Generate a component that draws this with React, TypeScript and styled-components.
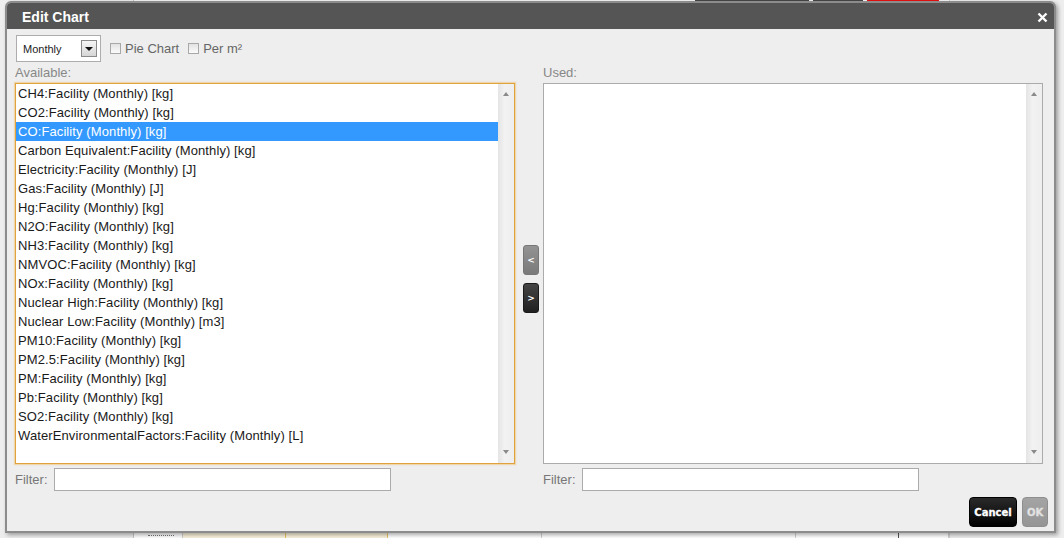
import React from "react";
import styled, { createGlobalStyle } from "styled-components";

const GlobalStyle = createGlobalStyle`
  html, body {
    margin: 0;
    padding: 0;
  }
  body {
    width: 1064px;
    height: 538px;
    overflow: hidden;
    background: #fff;
    font-family: "Liberation Sans", Arial, sans-serif;
  }
`;

const available = [
  "CH4:Facility (Monthly) [kg]",
  "CO2:Facility (Monthly) [kg]",
  "CO:Facility (Monthly) [kg]",
  "Carbon Equivalent:Facility (Monthly) [kg]",
  "Electricity:Facility (Monthly) [J]",
  "Gas:Facility (Monthly) [J]",
  "Hg:Facility (Monthly) [kg]",
  "N2O:Facility (Monthly) [kg]",
  "NH3:Facility (Monthly) [kg]",
  "NMVOC:Facility (Monthly) [kg]",
  "NOx:Facility (Monthly) [kg]",
  "Nuclear High:Facility (Monthly) [kg]",
  "Nuclear Low:Facility (Monthly) [m3]",
  "PM10:Facility (Monthly) [kg]",
  "PM2.5:Facility (Monthly) [kg]",
  "PM:Facility (Monthly) [kg]",
  "Pb:Facility (Monthly) [kg]",
  "SO2:Facility (Monthly) [kg]",
  "WaterEnvironmentalFactors:Facility (Monthly) [L]",
];

/* page behind the dialog */
const Page = styled.div`
  position: relative;
  display: flex;
  width: 1064px;
  height: 538px;
  overflow: hidden;
`;

const Sidebar = styled.div`
  width: 133px;
  background: #eeeeee;
  border-right: 1px solid #c4c4c4;
`;

const Main = styled.div`
  width: 815px;
  display: flex;
  flex-direction: column;
  background: #fff;
`;

const Header = styled.div`
  display: flex;
  justify-content: flex-end;
  height: 40px;
  padding-right: 10px;
  background: #f4f4f4;
`;

const HeaderButton = styled.div<{ $w: number; $red?: boolean }>`
  width: ${(p) => p.$w}px;
  height: 30px;
  margin-left: 4px;
  background: ${(p) => (p.$red ? "#e81010" : "#474747")};
`;

const Spacer = styled.div`
  flex: 1;
`;

const FooterRow = styled.div`
  display: flex;
  height: 5px;
`;

const Cell = styled.div<{ $w: number; $yellow?: boolean; $dark?: boolean }>`
  width: ${(p) => p.$w}px;
  box-sizing: border-box;
  background: ${(p) => (p.$yellow ? "#fbf3dc" : "#fff")};
  border-right: 1px solid ${(p) => (p.$yellow ? "#e8c464" : p.$dark ? "#555" : "#d0d0d0")};
`;

const Pager = styled.div`
  margin: 2px 0 0 14px;
  width: 26px;
  height: 3px;
  border-top: 1px dotted #777;
`;

const RightPanel = styled.div`
  flex: 1;
  background: #eeeeee;
  border-left: 1px solid #d4d4d4;
`;

/* dialog */
const Dialog = styled.div`
  position: absolute;
  left: 5px;
  top: 1px;
  width: 1051px;
  height: 532px;
  box-sizing: border-box;
  border: 2px solid #8c8c8c;
  border-radius: 6px 6px 0 0;
  background: #eeeeee;
  box-shadow: 2px 2px 4px rgba(0, 0, 0, 0.35);
  display: flex;
  flex-direction: column;
`;

const TitleBar = styled.div`
  height: 26px;
  box-sizing: border-box;
  padding: 2px 6px 0 15px;
  background: #555555;
  border-radius: 4px 4px 0 0;
  display: flex;
  align-items: center;
  justify-content: space-between;
  color: #fff;
  font-weight: bold;
  font-size: 14px;
`;

const Body = styled.div`
  flex: 1;
  display: flex;
  flex-direction: column;
  padding: 6px 6px 0 8px;
`;

const Toolbar = styled.div`
  display: flex;
  align-items: center;
  height: 27px;
`;

const SelectBox = styled.div`
  width: 85px;
  height: 27px;
  margin-left: 1px;
  box-sizing: border-box;
  border: 1px solid #adadad;
  background: #fff;
  display: flex;
  align-items: center;
  justify-content: space-between;
  padding: 0 3px 0 6px;
  font-size: 11px;
  color: #222;
`;

const DropButton = styled.div`
  width: 16px;
  height: 17px;
  box-sizing: border-box;
  border: 1px solid #8a8a8a;
  background: linear-gradient(#f6f6f6, #d6d6d6);
  display: flex;
  align-items: center;
  justify-content: center;
  &::after {
    content: "";
    border-left: 4px solid transparent;
    border-right: 4px solid transparent;
    border-top: 4px solid #111;
    margin-top: 1px;
  }
`;

const CheckBox = styled.span`
  width: 11px;
  height: 11px;
  margin-left: 9px;
  box-sizing: border-box;
  border: 1px solid #a8a8a8;
  background: linear-gradient(#e2e2e2, #fbfbfb);
`;

const CheckLabel = styled.span`
  margin-left: 4px;
  font-size: 13px;
  color: #666;
`;

const ListsRow = styled.div`
  display: grid;
  grid-template-columns: 500px 28px 500px;
`;

const Column = styled.div`
  display: flex;
  flex-direction: column;
`;

const Label = styled.div`
  height: 21px;
  box-sizing: border-box;
  padding-top: 3px;
  line-height: 15px;
  font-size: 13px;
  color: #888;
`;

const ListBox = styled.div<{ $focused?: boolean }>`
  height: 381px;
  box-sizing: border-box;
  border: 1px solid ${(p) => (p.$focused ? "#e0a23c" : "#ababab")};
  box-shadow: ${(p) => (p.$focused ? "0 0 1px 1px rgba(240, 196, 120, 0.55)" : "none")};
  background: #fff;
  display: flex;
`;

const Items = styled.div`
  flex: 1;
  overflow: hidden;
`;

const Item = styled.div<{ $selected?: boolean }>`
  height: 19px;
  line-height: 20px;
  padding-left: 2px;
  font-size: 13px;
  letter-spacing: 0.1px;
  white-space: nowrap;
  color: ${(p) => (p.$selected ? "#fff" : "#1a1a1a")};
  background: ${(p) => (p.$selected ? "#3399ff" : "transparent")};
`;

const Scrollbar = styled.div`
  width: 16px;
  background: linear-gradient(to right, #e4e4e4, #f2f2f2 40%, #eeeeee);
  display: flex;
  flex-direction: column;
  justify-content: space-between;
  align-items: center;
  padding: 8px 0 9px;
`;

const Arrow = styled.span<{ $down?: boolean }>`
  width: 0;
  height: 0;
  border-left: 3px solid transparent;
  border-right: 3px solid transparent;
  ${(p) => (p.$down ? "border-top: 4px solid #8a8a8a;" : "border-bottom: 4px solid #8a8a8a;")}
`;

const MiddleColumn = styled.div`
  display: flex;
  flex-direction: column;
  padding-top: 183px;
  gap: 8px;
`;

const SwapButton = styled.div<{ $dark?: boolean }>`
  width: 16px;
  height: 30px;
  margin-left: 8px;
  box-sizing: border-box;
  border-radius: 3px;
  border: 1px solid ${(p) => (p.$dark ? "#1a1a1a" : "#777")};
  background: ${(p) =>
    p.$dark ? "linear-gradient(#444, #202020)" : "linear-gradient(#939393, #7a7a7a)"};
  color: #fff;
  font-family: "DejaVu Sans", sans-serif;
  font-weight: bold;
  font-size: 9px;
  display: flex;
  align-items: center;
  justify-content: center;
`;

const FilterRow = styled.div`
  display: flex;
  align-items: center;
  height: 23px;
  margin-top: 4px;
`;

const FilterLabel = styled.span`
  width: 39px;
  font-size: 13px;
  color: #777;
`;

const FilterInput = styled.div`
  width: 337px;
  height: 23px;
  box-sizing: border-box;
  border: 1px solid #ababab;
  background: #fff;
`;

const Footer = styled.div`
  display: flex;
  justify-content: flex-end;
  gap: 5px;
  margin-top: 6px;
`;

const ActionButton = styled.div<{ $primary?: boolean; $w: number }>`
  width: ${(p) => p.$w}px;
  height: 30px;
  box-sizing: border-box;
  border-radius: 4px;
  border: 1px solid ${(p) => (p.$primary ? "#000" : "#8e8e8e")};
  background: ${(p) =>
    p.$primary ? "linear-gradient(#2a2a2a, #000)" : "linear-gradient(#a4a4a4, #959595)"};
  color: ${(p) => (p.$primary ? "#fff" : "#e2e2e2")};
  font-family: "DejaVu Sans", sans-serif;
  font-weight: bold;
  font-size: 10px;
  -webkit-text-stroke: 0.3px currentColor;
  display: flex;
  align-items: center;
  justify-content: center;
`;

function CloseIcon() {
  return (
    <svg width="11" height="11" viewBox="0 0 11 11">
      <path d="M1.5 1.5 L9.5 9.5 M9.5 1.5 L1.5 9.5" stroke="#fff" strokeWidth="2.4" />
    </svg>
  );
}

function List(props: { items: string[]; selected?: number; focused?: boolean }) {
  const { items, selected, focused } = props;
  return (
    <ListBox $focused={focused}>
      <Items>
        {items.map((it, i) => (
          <Item key={it} $selected={i === selected}>
            {it}
          </Item>
        ))}
      </Items>
      <Scrollbar>
        <Arrow />
        <Arrow $down />
      </Scrollbar>
    </ListBox>
  );
}

export default function App() {
  return (
    <Page>
      <GlobalStyle />
      <Sidebar />
      <Main>
        <Header>
          <HeaderButton $w={114} />
          <HeaderButton $w={50} />
          <HeaderButton $w={72} $red />
        </Header>
        <Spacer />
        <FooterRow>
          <Cell $w={49}>
            <Pager />
          </Cell>
          <Cell $w={103} $yellow />
          <Cell $w={102} $yellow />
          <Cell $w={154} />
          <Cell $w={254} />
          <Cell $w={103} $dark />
          <Cell $w={50} />
        </FooterRow>
      </Main>
      <RightPanel />

      <Dialog>
        <TitleBar>
          <span>Edit Chart</span>
          <CloseIcon />
        </TitleBar>
        <Body>
          <Toolbar>
            <SelectBox>
              Monthly
              <DropButton />
            </SelectBox>
            <CheckBox />
            <CheckLabel>Pie Chart</CheckLabel>
            <CheckBox />
            <CheckLabel>Per m²</CheckLabel>
          </Toolbar>
          <ListsRow>
            <Column>
              <Label>Available:</Label>
              <List items={available} selected={2} focused />
              <FilterRow>
                <FilterLabel>Filter:</FilterLabel>
                <FilterInput />
              </FilterRow>
            </Column>
            <MiddleColumn>
              <SwapButton>&lt;</SwapButton>
              <SwapButton $dark>&gt;</SwapButton>
            </MiddleColumn>
            <Column>
              <Label>Used:</Label>
              <List items={[]} />
              <FilterRow>
                <FilterLabel>Filter:</FilterLabel>
                <FilterInput />
              </FilterRow>
            </Column>
          </ListsRow>
          <Footer>
            <ActionButton $primary $w={48}>
              Cancel
            </ActionButton>
            <ActionButton $w={26}>OK</ActionButton>
          </Footer>
        </Body>
      </Dialog>
    </Page>
  );
}
